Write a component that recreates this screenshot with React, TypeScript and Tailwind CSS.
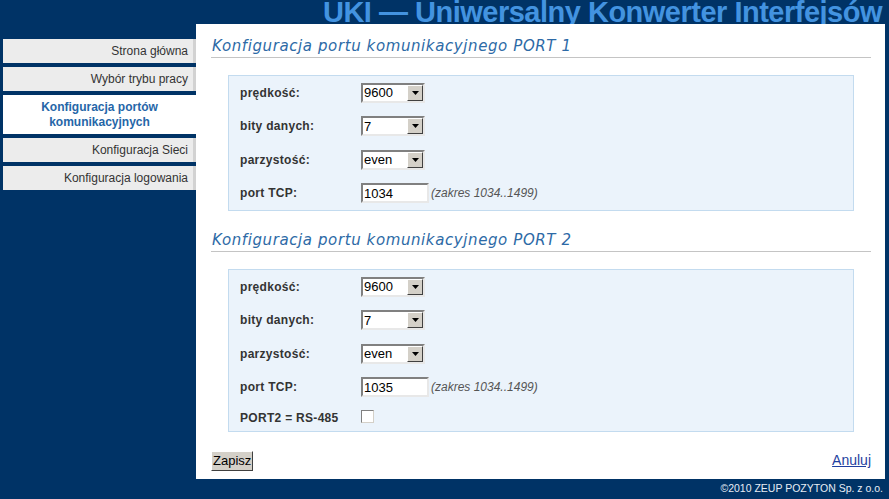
import React from 'react';

const menu = [
  { label: 'Strona główna' },
  { label: 'Wybór trybu pracy' },
  { label: 'Konfiguracja portów komunikacyjnych', active: true },
  { label: 'Konfiguracja Sieci' },
  { label: 'Konfiguracja logowania' },
];

const Arrow = () => (
  <div className="w-[16px] h-[16px] bg-[#d4d0c8] border border-t-white border-l-white border-b-[#404040] border-r-[#404040] flex items-center justify-center">
    <svg width="7" height="4" viewBox="0 0 7 4">
      <polygon points="0,0 7,0 3.5,4" fill="#000" />
    </svg>
  </div>
);

const Select = ({ value }: { value: string }) => (
  <div className="w-[64px] h-[20px] bg-white border-2 border-t-[#808080] border-l-[#808080] border-b-[#e8e8e8] border-r-[#e8e8e8] flex items-center justify-between">
    <span className="pl-[1px] text-[13px] leading-none text-black">{value}</span>
    <Arrow />
  </div>
);

const TextInput = ({ value }: { value: string }) => (
  <div className="w-[68px] h-[20px] bg-white border-2 border-t-[#808080] border-l-[#808080] border-b-[#e8e8e8] border-r-[#e8e8e8] flex items-center">
    <span className="pl-[1px] text-[13px] leading-none text-black">{value}</span>
  </div>
);

const Row = ({ label, children, h = 'h-[33.5px]' }: { label: string; children: React.ReactNode; h?: string }) => (
  <div className={`${h} flex items-center`}>
    <div className="w-[132px] pl-[11px] text-[12px] font-bold tracking-[0.3px] text-[#333]">{label}</div>
    {children}
  </div>
);

const Heading = ({ children }: { children: React.ReactNode }) => (
  <div className="ml-[15px] w-[660px] h-[22px] border-b border-[#c4c4c4] pl-[1px] text-[15px] leading-[20px] italic tracking-[0.6px] text-[#2d6aa6] font-['DejaVu_Sans',sans-serif]">
    {children}
  </div>
);

const PortBox = ({ port, last }: { port: string; last?: boolean }) => (
  <div className="ml-[32px] w-[626px] bg-[#ebf3fb] border border-[#c3dbef]">
    <Row label="prędkość:">
      <Select value="9600" />
    </Row>
    <Row label="bity danych:">
      <Select value="7" />
    </Row>
    <Row label="parzystość:">
      <Select value="even" />
    </Row>
    <Row label="port TCP:">
      <TextInput value={port} />
      <span className="ml-[2px] text-[12px] italic text-[#555]">(zakres 1034..1499)</span>
    </Row>
    {last && (
      <Row label="PORT2 = RS-485" h="h-[27px]">
        <div className="w-[13px] h-[13px] bg-white border border-t-[#808080] border-l-[#808080] border-b-[#d4d0c8] border-r-[#d4d0c8] -mt-[2px]" />
      </Row>
    )}
  </div>
);

export default function App() {
  return (
    <div className="w-[889px] h-[499px] bg-[#003366] flex flex-col font-['Liberation_Sans',Arial,sans-serif] overflow-hidden">
      {/* title */}
      <div className="h-[24px] overflow-hidden text-right pr-[7px]">
        <div className="-mt-[3px] text-[29px] leading-[30px] font-bold tracking-[-0.5px] text-[#4393e0] whitespace-nowrap">
          UKI — Uniwersalny Konwerter Interfejsów
        </div>
      </div>

      <div className="flex h-[455px]">
        {/* side menu */}
        <div className="w-[196px] pl-[3px] pt-[15px] flex flex-col gap-[4px]">
          {menu.map((m) =>
            m.active ? (
              <div
                key={m.label}
                className="h-[39px] bg-white flex items-center justify-center text-center px-[30px] text-[12px] leading-[15px] font-bold text-[#2566a8]"
              >
                {m.label}
              </div>
            ) : (
              <div
                key={m.label}
                className="h-[24px] bg-[#ececec] border-r-[3px] border-[#d2d2d2] flex items-center justify-end pr-[5px] text-[12px] text-[#333]"
              >
                {m.label}
              </div>
            )
          )}
        </div>

        {/* content */}
        <div className="w-[689px] bg-white pt-[12px] flex flex-col">
          <Heading>Konfiguracja portu komunikacyjnego PORT 1</Heading>
          <div className="mt-[17px]">
            <PortBox port="1034" />
          </div>
          <div className="mt-[19px]">
            <Heading>Konfiguracja portu komunikacyjnego PORT 2</Heading>
          </div>
          <div className="mt-[17px]">
            <PortBox port="1035" last />
          </div>
          <div className="mt-[18px] ml-[15px] w-[660px] flex items-center justify-between">
            <button className="h-[20px] px-[1px] bg-[#d4d0c8] border border-t-white border-l-white border-b-[#404040] border-r-[#404040] text-[13px] leading-none text-black">
              Zapisz
            </button>
            <a href="#" className="text-[14px] text-[#1f3fa0] underline">
              Anuluj
            </a>
          </div>
        </div>
      </div>

      {/* footer */}
      <div className="flex-1 flex items-center justify-end pr-[6px] text-[10.5px] text-[#e6edf5]">
        ©2010 ZEUP POZYTON Sp. z o.o.
      </div>
    </div>
  );
}
